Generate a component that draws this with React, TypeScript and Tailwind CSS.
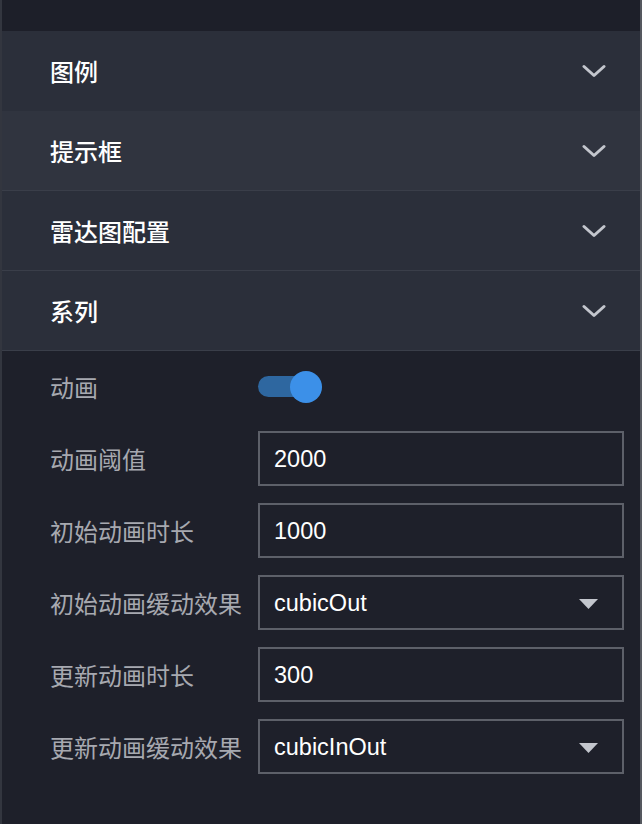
import React from 'react';

const cjk = "font-['Noto_Sans_CJK_SC','Noto_Sans',sans-serif]";
const latin = "font-['Liberation_Sans','Noto_Sans_CJK_SC',sans-serif]";

function Chevron() {
  return (
    <svg width="24" height="14" viewBox="0 0 24 14" fill="none" className="shrink-0">
      <path d="M2 2.5 L12 11.5 L22 2.5" stroke="#c3c6cd" strokeWidth="3" strokeLinecap="round" strokeLinejoin="round" />
    </svg>
  );
}

function Caret() {
  return (
    <svg width="19" height="10" viewBox="0 0 19 10" className="shrink-0">
      <path d="M0 0 H19 L9.5 10 Z" fill="#c3c6cd" />
    </svg>
  );
}

const sections = [
  { title: '图例', cls: 'bg-[#2b2f3a] border-b border-transparent' },
  { title: '提示框', cls: 'bg-[#30343f] border-b border-[#3a3e49]' },
  { title: '雷达图配置', cls: 'bg-[#2b2f3a] border-b border-[#3a3e49]' },
  { title: '系列', cls: 'bg-[#2b2f3a] border-b border-[#3a3e49]' },
];

type Field = { label: string; value: string; select?: boolean };

const fields: Field[] = [
  { label: '动画阈值', value: '2000' },
  { label: '初始动画时长', value: '1000' },
  { label: '初始动画缓动效果', value: 'cubicOut', select: true },
  { label: '更新动画时长', value: '300' },
  { label: '更新动画缓动效果', value: 'cubicInOut', select: true },
];

export default function App() {
  return (
    <div className="w-[642px] h-[824px] bg-[#1e202a] flex border-l-2 border-l-[#33363f] border-r-2 border-r-[#55585f] overflow-hidden">
      <div className="flex-1 flex flex-col">
        <div className="h-[31px] bg-[#1d1f29]" />

        {sections.map((s) => (
          <div key={s.title} className={`h-[80px] flex items-center justify-between pl-[48px] pr-[34px] ${s.cls}`}>
            <span className={`${cjk} text-[24px] font-medium text-white leading-none`}>{s.title}</span>
            <Chevron />
          </div>
        ))}

        <div className="flex flex-col gap-[17px] pt-[8px] pl-[48px] pr-[16px]">
          <div className="h-[55px] flex items-center">
            <span className={`${cjk} w-[208px] text-[24px] text-[#a7a9b0] leading-none`}>动画</span>
            <div className="relative w-[64px] h-[32px] flex items-center">
              <div className="w-[52px] h-[21px] rounded-full bg-[#2e67a0]" />
              <div className="absolute right-0 top-0 w-[32px] h-[32px] rounded-full bg-[#3c90e8]" />
            </div>
          </div>

          {fields.map((f) => (
            <div key={f.label} className="h-[55px] flex items-center">
              <span className={`${cjk} w-[208px] shrink-0 text-[24px] text-[#a7a9b0] leading-none`}>{f.label}</span>
              <div className="flex-1 h-[55px] border-2 border-[#5d6069] flex items-center justify-between pl-[14px] pr-[24px] pt-[2px]">
                <span className={`${latin} text-[23.5px] text-white leading-none`}>{f.value}</span>
                {f.select && <Caret />}
              </div>
            </div>
          ))}
        </div>
      </div>
    </div>
  );
}
